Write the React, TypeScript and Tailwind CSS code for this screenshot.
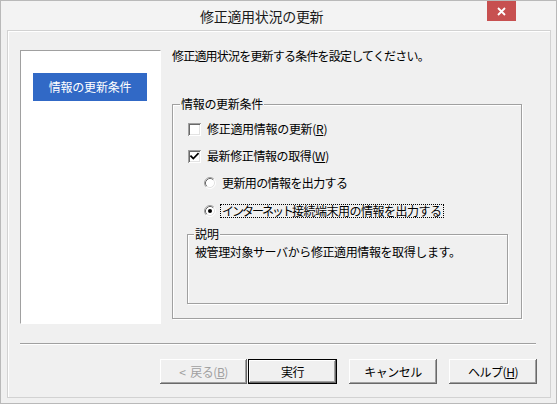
import React from "react";

const FONT = { fontFamily: '"Noto Sans CJK JP", "Noto Sans", sans-serif' };

function Checkbox({ checked }: { checked?: boolean }) {
  return (
    <div className="relative w-[13px] h-[13px] shrink-0 bg-white shadow-[inset_1px_1px_0_#a0a0a0,inset_-1px_-1px_0_#ffffff,inset_2px_2px_0_#696969,inset_-2px_-2px_0_#e3e3e3]">
      {checked && (
        <svg className="absolute left-0 top-0" width="13" height="13" viewBox="0 0 13 13">
          <path d="M3 6.2 L5.3 8.6 L10 3.8" stroke="#000" strokeWidth="1.7" fill="none" strokeLinecap="square" />
        </svg>
      )}
    </div>
  );
}

function Radio({ checked }: { checked?: boolean }) {
  return (
    <svg width="12" height="12" viewBox="0 0 12 12" className="shrink-0">
      <circle cx="6" cy="6" r="5" fill="#fff" />
      <path d="M2.11 9.89 A5.5 5.5 0 0 1 9.89 2.11" stroke="#a0a0a0" strokeWidth="1" fill="none" />
      <path d="M9.89 2.11 A5.5 5.5 0 0 1 2.11 9.89" stroke="#ffffff" strokeWidth="1" fill="none" />
      <path d="M2.82 9.18 A4.5 4.5 0 0 1 9.18 2.82" stroke="#696969" strokeWidth="1" fill="none" />
      <path d="M9.18 2.82 A4.5 4.5 0 0 1 2.82 9.18" stroke="#e3e3e3" strokeWidth="1" fill="none" />
      {checked && <circle cx="6" cy="6" r="2" fill="#000" />}
    </svg>
  );
}

function Btn({ children, disabled, def, w }: { children: React.ReactNode; disabled?: boolean; def?: boolean; w: string }) {
  return (
    <div
      className={
        "h-[25px] shrink-0 flex items-center justify-center text-[12px] leading-[14px] tracking-[-0.5px] bg-[#f0f0f0] " +
        w +
        " " +
        (def
          ? "border border-black shadow-[inset_-1px_-1px_0_#696969,inset_1px_1px_0_#ffffff,inset_-2px_-2px_0_#a0a0a0] text-black"
          : "shadow-[inset_-1px_-1px_0_#696969,inset_1px_1px_0_#ffffff,inset_-2px_-2px_0_#a0a0a0] ") +
        (disabled ? " text-[#a0a0a0]" : " text-black")
      }
    >
      {children}
    </div>
  );
}

export default function App() {
  return (
    <div
      style={FONT}
      className="w-[557px] h-[404px] bg-[#f0f0f0] border border-[#b9b9b9] flex flex-col text-black"
    >
      {/* title bar */}
      <div className="h-[29px] shrink-0 flex items-start bg-[#f3f3f3]">
        <div className="ml-[199px] mt-[6px] text-[14px] leading-[18px] tracking-[-0.3px] text-[#1a1a1a]">
          修正適用状況の更新
        </div>
        <div className="flex-1" />
        <div className="mr-[40px] w-[29px] h-[20px] bg-[#c75050] flex items-center justify-center">
          <svg width="9" height="9" viewBox="0 0 9 9">
            <path d="M1 1 L8 8 M8 1 L1 8" stroke="#fff" strokeWidth="1.8" />
          </svg>
        </div>
      </div>

      {/* body */}
      <div className="ml-[6px] w-[544px] h-[368px] shrink-0 border border-[#d2d2d2] shadow-[inset_1px_1px_0_#ffffff] flex flex-col pl-[12px] pt-[19px] pr-[13px]">
        <div className="flex items-start">
          {/* left list */}
          <div className="w-[141px] h-[274px] shrink-0 bg-white border-t border-l border-[#a0a0a0] border-r border-r-[#ffffff] border-b border-b-[#ffffff] pt-[22px] pl-[12px]">
            <div className="w-[114px] h-[28px] bg-[#3169c6] text-white text-[12px] leading-[14px] tracking-[-0.2px] flex items-center justify-center">
              情報の更新条件
            </div>
          </div>

          {/* right column */}
          <div className="ml-[11px] flex flex-col">
            <div className="text-[12px] leading-[12px] tracking-[-0.8px] whitespace-nowrap">
              修正適用状況を更新する条件を設定してください。
            </div>

            {/* group box */}
            <div className="relative mt-[42px] w-[350px] h-[215px] border border-[#a0a0a0] shadow-[inset_1px_1px_0_#ffffff,1px_1px_0_#ffffff] pl-[15px] pt-[16px]">
              <div className="absolute -top-[8px] left-[7px] bg-[#f0f0f0] px-[1px] text-[12px] leading-[14px] tracking-[-0.3px]">
                情報の更新条件
              </div>

              <div className="h-[16px] flex items-center">
                <Checkbox />
                <span className="ml-[6px] text-[12px] leading-[14px] tracking-[-0.3px]">
                  修正適用情報の更新(<span className="underline">R</span>)
                </span>
              </div>
              <div className="mt-[11px] h-[16px] flex items-center">
                <Checkbox checked />
                <span className="ml-[6px] text-[12px] leading-[14px] tracking-[-0.4px]">
                  最新修正情報の取得(<span className="underline">W</span>)
                </span>
              </div>
              <div className="mt-[11px] ml-[16px] h-[16px] flex items-center">
                <Radio />
                <span className="ml-[6px] text-[12px] leading-[14px] tracking-[-0.6px]">
                  更新用の情報を出力する
                </span>
              </div>
              <div className="mt-[12px] ml-[16px] h-[16px] flex items-center">
                <Radio checked />
                <span className="ml-[4px] px-[1px] border border-dotted border-black text-[12px] leading-[12px] whitespace-nowrap">
                  <span className="tracking-[-2px]">インターネット</span>
                  <span className="tracking-[-0.5px]">接続端末用の情報を出力する</span>
                </span>
              </div>

              {/* description */}
              <div className="relative mt-[15px] -ml-[1px] w-[321px] h-[70px] border border-[#a0a0a0] shadow-[inset_1px_1px_0_#ffffff,1px_1px_0_#ffffff] pl-[7px] pt-[10px]">
                <div className="absolute -top-[8px] left-[6px] bg-[#f0f0f0] px-[1px] text-[12px] leading-[14px]">
                  説明
                </div>
                <div className="text-[12px] leading-[14px] tracking-[-0.4px] whitespace-nowrap">
                  被管理対象サーバから修正適用情報を取得します。
                </div>
              </div>
            </div>
          </div>
        </div>

        {/* separator */}
        <div className="mt-[19px] w-[516px] h-[2px] border-t border-[#a0a0a0] border-b border-b-white" />

        {/* buttons */}
        <div className="mt-[14px] flex items-start">
          <div className="flex-1" />
          <Btn w="w-[87px]" disabled>
            <span>&lt;</span>
            <span className="ml-[5px]">
              戻る(<span className="underline">B</span>)
            </span>
          </Btn>
          <div className="w-[1px]" />
          <Btn w="w-[89px]" def>
            実行
          </Btn>
          <div className="w-[12px]" />
          <Btn w="w-[88px]">キャンセル</Btn>
          <div className="w-[12px]" />
          <Btn w="w-[88px]">
            ヘルプ(<span className="underline">H</span>)
          </Btn>
        </div>
      </div>
    </div>
  );
}
